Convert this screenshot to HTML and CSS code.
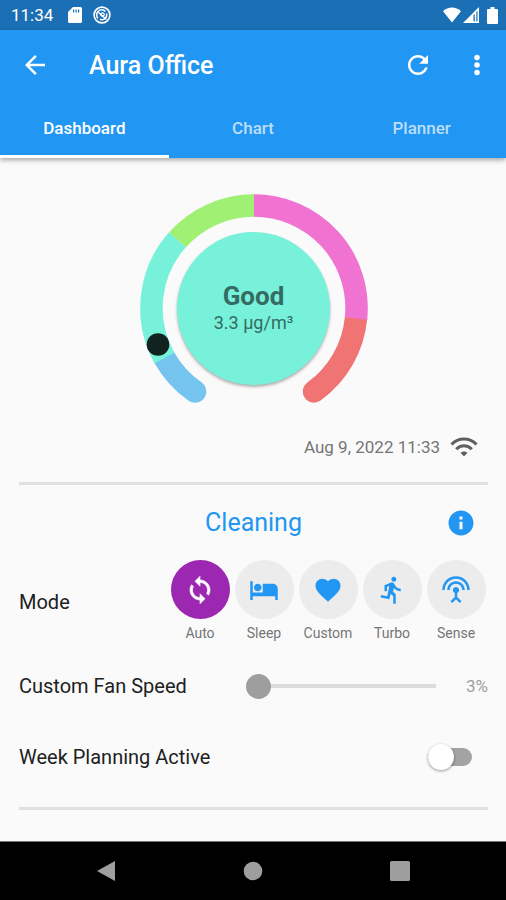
FILE: index.html
```html
<!DOCTYPE html>
<html lang="en">

<head>
    <meta charset="UTF-8">
    <meta name="viewport" content="width=device-width, initial-scale=1">
    <title>Aura Office</title>
    <link rel="stylesheet" href="styles.css">
</head>

<body>
    <div class="status-bar">
        <span class="clock">11:34</span>
        <svg width="14" height="18" viewBox="0 0 14 18">
            <path fill="#fff" fill-rule="evenodd" d="M5 1h7.500a1.500 1.500 0 0 1 1.500 1.500v13a1.500 1.500 0 0 1-1.500 1.500h-11A1.500 1.500 0 0 1 0 15.500V6zM5 3.500v3h1.200v-3zm2.500 0v3h1.200v-3zm2.500 0v3h1.200v-3z" />
        </svg>
        <svg width="18" height="18" viewBox="0 0 18 18" fill="none" stroke="#fff">
            <circle cx="9" cy="9" r="7.900" stroke-width="1.700" />
            <path stroke-width="1.500" d="M5 12.500A4.800 4.800 0 0 1 12.500 5.500M13.500 7.500A4.800 4.800 0 0 1 7 13.300M5.500 6.500L13.500 13.500" />
            <circle cx="9.500" cy="8.500" r="1.700" stroke-width="1.300" />
        </svg>
        <div class="status-right">
            <svg width="18" height="16" viewBox="0 0 18 16">
                <path fill="#fff" d="M9 15.500L0 4.200C5 -.8 13 -.8 18 4.200z" />
            </svg>
            <svg width="16" height="16" viewBox="0 0 16 16">
                <path fill="#fff" fill-rule="evenodd" d="M0 16L16 0v16zM10.500 8v6.500h1.300V7zM13.300 5v9.500h1.200V4z" />
            </svg>
            <svg class="battery" width="11" height="17" viewBox="0 0 11 17">
                <path fill="#fff" d="M3.500 0h4v2H10a1 1 0 0 1 1 1v13a1 1 0 0 1-1 1H1a1 1 0 0 1-1-1V3a1 1 0 0 1 1-1h2.500z" />
            </svg>
        </div>
    </div>

    <header class="header">
        <div class="toolbar">
            <button type="button" class="icon-btn" aria-label="Back">
                <svg class="icon" viewBox="0 0 24 24"><path d="M20 11H7.830l5.590-5.590L12 4l-8 8 8 8 1.410-1.410L7.830 13H20v-2z" /></svg>
            </button>
            <h1 class="title">Aura Office</h1>
            <button type="button" class="icon-btn refresh" aria-label="Refresh">
                <svg class="icon" viewBox="0 0 24 24"><path d="M17.650 6.350C16.200 4.900 14.210 4 12 4c-4.420 0-7.990 3.580-7.990 8s3.570 8 7.990 8c3.730 0 6.840-2.550 7.730-6h-2.080c-.82 2.330-3.040 4-5.650 4-3.310 0-6-2.690-6-6s2.690-6 6-6c1.660 0 3.140.69 4.220 1.780L13 11h7V4l-2.350 2.350z" /></svg>
            </button>
            <button type="button" class="icon-btn" aria-label="More">
                <svg class="icon" viewBox="0 0 24 24"><circle cx="12" cy="6" r="2.200" /><circle cx="12" cy="12" r="2.200" /><circle cx="12" cy="18" r="2.200" /></svg>
            </button>
        </div>
        <nav class="tabs">
            <a href="#dashboard" class="tab active">Dashboard</a>
            <a href="#chart" class="tab">Chart</a>
            <a href="#planner" class="tab">Planner</a>
        </nav>
    </header>

    <main class="content">
        <div class="gauge">
            <svg class="gauge-ring" width="228" height="228" viewBox="-114 -114 228 228" fill="none" stroke-width="22.500">
                <path stroke="#75c4ef" stroke-linecap="round" d="M-59 83.500A102.500 102.500 0 0 1-89.500 50" />
                <path stroke="#f17474" stroke-linecap="round" d="M102 10.500A102.500 102.500 0 0 1 60 83.500" />
                <path stroke="#77f1da" d="M-89.500 50A102.500 102.500 0 0 1-76.500-68.300" />
                <path stroke="#a0f073" d="M-76.500-68.300A102.500 102.500 0 0 1 0-102.500" />
                <path stroke="#f073d1" d="M0-102.500A102.500 102.500 0 0 1 102 10.500" />
                <circle cx="-96" cy="36.500" r="11.300" fill="#10231f" stroke="none" />
            </svg>
            <div class="gauge-value">
                <strong class="quality">Good</strong>
                <span class="amount">3.3 µg/m³</span>
            </div>
        </div>

        <div class="updated">
            <span>Aug 9, 2022 11:33</span>
            <svg width="28" height="20" viewBox="0 0 28 20" fill="none" stroke="#5f5f5f" stroke-width="3">
                <path d="M1.500 7.500C8.500 .2 19.500 .2 26.500 7.500M6.200 12.200C10.500 7.600 17.500 7.600 21.800 12.200" />
                <path fill="#5f5f5f" stroke="none" d="M14 19.500l-3.500-3.700q3.500-2.600 7 0z" />
            </svg>
        </div>

        <section class="cleaning">
            <div class="section-head">
                <h2 class="section-title">Cleaning</h2>
                <button type="button" class="icon-btn info" aria-label="Info">
                    <svg class="icon" viewBox="0 0 24 24"><path d="M12 2C6.480 2 2 6.480 2 12s4.480 10 10 10 10-4.480 10-10S17.520 2 12 2zm1.200 15h-2.400v-6h2.400v6zm0-7.800h-2.400V6.800h2.400v2.400z" /></svg>
                </button>
            </div>

            <div class="mode-row">
                <span class="label">Mode</span>
                <div class="modes">
                    <button type="button" class="mode selected">
                        <span class="mode-circle">
                            <svg class="icon" viewBox="0 0 24 24" stroke="currentColor" stroke-width="0.500"><path d="M12 4V1L8 5l4 4V6c3.310 0 6 2.690 6 6 0 1.010-.25 1.970-.7 2.800l1.460 1.460C19.540 15.030 20 13.570 20 12c0-4.420-3.580-8-8-8zm0 14c-3.310 0-6-2.690-6-6 0-1.010.25-1.970.7-2.800L5.240 7.740C4.460 8.970 4 10.430 4 12c0 4.420 3.580 8 8 8v3l4-4-4-4v3z" /></svg>
                        </span>
                        Auto
                    </button>
                    <button type="button" class="mode">
                        <span class="mode-circle">
                            <svg class="icon" viewBox="0 0 24 24"><path d="M7 13c1.660 0 3-1.340 3-3S8.660 7 7 7s-3 1.340-3 3 1.340 3 3 3zm12-6h-8v7H3V5H1v15h2v-3h18v3h2v-9c0-2.210-1.790-4-4-4z" /></svg>
                        </span>
                        Sleep
                    </button>
                    <button type="button" class="mode">
                        <span class="mode-circle">
                            <svg class="icon" viewBox="0 0 24 24"><path d="M12 21.350l-1.450-1.320C5.400 15.360 2 12.280 2 8.500 2 5.420 4.420 3 7.500 3c1.740 0 3.410.81 4.500 2.090C13.090 3.810 14.760 3 16.500 3 19.580 3 22 5.420 22 8.500c0 3.780-3.400 6.860-8.550 11.540L12 21.350z" /></svg>
                        </span>
                        Custom
                    </button>
                    <button type="button" class="mode">
                        <span class="mode-circle">
                            <svg class="icon" viewBox="0 0 24 24"><path d="M13.490 5.480c1.100 0 2-.9 2-2s-.9-2-2-2-2 .9-2 2 .9 2 2 2zm-3.600 13.900l1-4.400 2.100 2v6h2v-7.500l-2.100-2 .6-3c1.300 1.500 3.300 2.500 5.500 2.500v-2c-1.900 0-3.500-1-4.300-2.400l-1-1.600c-.4-.6-1-1-1.700-1-.3 0-.5.1-.8.1l-5.200 2.200v4.700h2v-3.400l1.800-.7-1.600 8.100-4.900-1-.4 2 7 1.400z" /></svg>
                        </span>
                        Turbo
                    </button>
                    <button type="button" class="mode">
                        <span class="mode-circle">
                            <svg class="icon" viewBox="0 0 24 24"><path d="M12 5c-3.870 0-7 3.130-7 7h2c0-2.760 2.240-5 5-5s5 2.240 5 5h2c0-3.870-3.130-7-7-7zm1 9.290c.88-.39 1.500-1.260 1.500-2.290 0-1.380-1.120-2.500-2.500-2.500S9.500 10.620 9.500 12c0 1.020.62 1.900 1.500 2.290v3.300L7.590 21 9 22.410l3-3 3 3L16.410 21 13 17.590v-3.300zM12 1C5.930 1 1 5.930 1 12h2c0-4.970 4.030-9 9-9s9 4.030 9 9h2c0-6.070-4.930-11-11-11z" /></svg>
                        </span>
                        Sense
                    </button>
                </div>
            </div>

            <div class="fan-row">
                <label class="label" for="fan-speed">Custom Fan Speed</label>
                <input type="range" id="fan-speed" class="slider" min="3" max="100" value="3">
                <output class="percent" for="fan-speed">3%</output>
            </div>

            <div class="plan-row">
                <label class="label" for="week-plan">Week Planning Active</label>
                <input type="checkbox" id="week-plan" class="switch">
            </div>
        </section>
    </main>

    <footer class="nav-bar">
        <button type="button" class="nav-btn" aria-label="Back">
            <svg width="20" height="22" viewBox="0 0 20 22"><path d="M19 1v20L1 11z" /></svg>
        </button>
        <button type="button" class="nav-btn" aria-label="Home">
            <svg width="20" height="20" viewBox="0 0 20 20"><circle cx="10" cy="10" r="9.300" /></svg>
        </button>
        <button type="button" class="nav-btn" aria-label="Recent apps">
            <svg width="20" height="20" viewBox="0 0 20 20"><rect width="20" height="20" rx="1.500" /></svg>
        </button>
    </footer>

    <script>
        const slider = document.getElementById('fan-speed');
        const percent = document.querySelector('.percent');
        const modes = document.querySelectorAll('.mode');

        slider.addEventListener('input', function () {
            percent.textContent = slider.value + '%';
        });

        modes.forEach(function (mode) {
            mode.addEventListener('click', function () {
                modes.forEach(item => item.classList.remove('selected'));
                mode.classList.add('selected');
            });
        });
    </script>
</body>

</html>
```

FILE: styles.css
```css
* {
    box-sizing: border-box;
}

body {
    margin: 0;
    min-height: 100vh;
    display: flex;
    flex-direction: column;
    background-color: #fafafa;
    color: #212121;
    font-family: Roboto, "Liberation Sans", sans-serif;
    font-size: 20px;
}

button {
    padding: 0;
    border: none;
    background: none;
    font-family: inherit;
    cursor: pointer;
}

svg {
    display: block;
}

.icon {
    width: 30px;
    height: 30px;
    fill: currentColor;
}

/* status bar */
.status-bar {
    display: flex;
    align-items: center;
    gap: 11px;
    height: 30px;
    padding: 0 8px 0 11px;
    background-color: #1a6fb5;
    color: #fff;
}

.clock {
    margin-right: 4px;
    font-size: 17px;
    line-height: 30px;
}

.status-right {
    display: flex;
    align-items: center;
    gap: 2px;
    margin-left: auto;
}

.battery {
    margin-left: 6px;
}

/* header */
.header {
    background-color: #2196f3;
    color: #fff;
    box-shadow: 0 2px 5px rgba(0, 0, 0, 0.35);
}

.toolbar {
    display: flex;
    align-items: center;
    height: 70px;
    padding: 0 14px 0 20px;
}

.icon-btn {
    color: inherit;
}

.title {
    flex: 1;
    margin: 0;
    padding-left: 39px;
    font-size: 25px;
    font-weight: 500;
}

.refresh {
    margin-right: 29px;
}

.tabs {
    display: flex;
}

.tab {
    flex: 1;
    height: 58px;
    border-bottom: 3px solid transparent;
    color: rgba(255, 255, 255, 0.7);
    font-size: 17px;
    font-weight: 500;
    line-height: 56px;
    text-align: center;
    text-decoration: none;
}

.tab.active {
    border-bottom-color: #fff;
    color: #fff;
}

/* dashboard */
.content {
    padding: 36px 18px 0 19px;
}

.gauge {
    display: grid;
    place-items: center;
}

.gauge-ring,
.gauge-value {
    grid-area: 1 / 1;
}

.gauge-value {
    display: flex;
    flex-direction: column;
    align-items: center;
    justify-content: center;
    width: 153px;
    height: 153px;
    padding-top: 2px;
    border-radius: 50%;
    background-color: #77f1da;
    box-shadow: 0 2px 3px rgba(0, 0, 0, 0.3);
    color: #356b62;
}

.quality {
    font-size: 26px;
    line-height: 28px;
}

.amount {
    font-size: 18px;
    line-height: 26px;
}

.updated {
    display: flex;
    align-items: center;
    justify-content: flex-end;
    gap: 10px;
    padding: 13px 10px 23px 0;
    color: #757575;
    font-size: 17px;
    line-height: 24px;
}

.cleaning {
    border-top: 3px solid #e0e0e0;
    border-bottom: 3px solid #e0e0e0;
}

.section-head {
    display: grid;
    grid-template-columns: 1fr auto 1fr;
    align-items: center;
    height: 75px;
    padding: 0 12px;
    color: #2196f3;
}

.section-title {
    grid-column: 2;
    margin: 0;
    font-size: 25px;
    font-weight: 400;
}

.info {
    justify-self: end;
}

.label {
    color: #212121;
    font-size: 20px;
}

.mode-row,
.plan-row {
    display: flex;
    align-items: center;
    justify-content: space-between;
}

.modes {
    display: flex;
}

.mode {
    display: flex;
    flex-direction: column;
    align-items: center;
    gap: 4px;
    width: 64px;
    color: #757575;
    font-size: 14px;
    line-height: 20px;
}

.mode-circle {
    display: grid;
    place-items: center;
    width: 59px;
    height: 59px;
    border-radius: 50%;
    background-color: #ececec;
    color: #2196f3;
}

.mode.selected .mode-circle {
    background-color: #9c27b0;
    color: #fff;
}

.fan-row {
    display: grid;
    grid-template-columns: 227px 1fr 52px;
    align-items: center;
    height: 86px;
}

.slider {
    appearance: none;
    width: 100%;
    height: 26px;
    margin: 0;
    background: linear-gradient(#dcdcdc, #dcdcdc) center / 100% 4px no-repeat;
}

.slider::-webkit-slider-thumb {
    appearance: none;
    width: 25px;
    height: 25px;
    border-radius: 50%;
    background-color: #9e9e9e;
}

.percent {
    color: #9e9e9e;
    font-size: 17px;
    text-align: right;
}

.plan-row {
    height: 78px;
    padding-bottom: 22px;
}

.switch {
    appearance: none;
    display: flex;
    align-items: center;
    width: 44px;
    height: 18px;
    margin: 0 16px 0 0;
    border-radius: 9px;
    background-color: #a3a3a3;
    cursor: pointer;
}

.switch::before {
    content: "";
    width: 26px;
    height: 26px;
    flex: none;
    border-radius: 50%;
    background-color: #fff;
    box-shadow: 0 1px 3px rgba(0, 0, 0, 0.4);
}

.switch:checked {
    justify-content: flex-end;
    background-color: #90caf9;
}

/* system navigation */
.nav-bar {
    display: grid;
    grid-template-columns: repeat(3, 1fr);
    place-items: center;
    height: 59px;
    margin-top: auto;
    padding: 0 32px;
    border-top: 1px solid #777;
    background-color: #000;
}

.nav-btn {
    fill: #9e9e9e;
}
```
